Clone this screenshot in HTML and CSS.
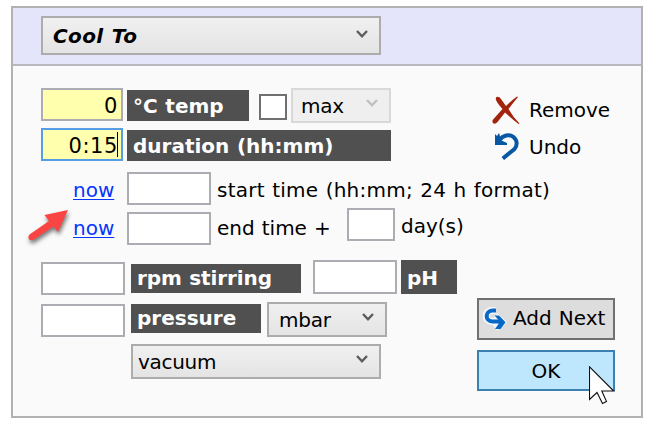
FILE: index.html
```html
<!DOCTYPE html>
<html lang="en">
<head>
<meta charset="utf-8">
<title>Cool To</title>
<link rel="stylesheet" href="styles.css">
</head>
<body>
<svg class="defs" width="0" height="0"><defs>
<symbol id="chevron" viewBox="0 0 12 9"><path d="M1 1L6 6.3L11 1" fill="none" stroke="currentColor" stroke-width="2.4"/></symbol>
</defs></svg>
<main class="panel">
  <header class="head">
    <div class="select operation"><span>Cool To</span><svg class="chev"><use href="#chevron"/></svg></div>
  </header>
  <div class="content">
    <section class="form">
      <div class="row temp">
        <div class="field required">0</div>
        <div class="tag temp-tag">°C temp</div>
        <div class="check"></div>
        <div class="select disabled"><span>max</span><svg class="chev"><use href="#chevron"/></svg></div>
      </div>
      <div class="row duration">
        <div class="field required focus">0:15<i class="caret"></i></div>
        <div class="tag duration-tag">duration (hh:mm)</div>
      </div>
      <div class="row start">
        <a class="now">now</a><div class="field"></div><span class="text start-text">start time (hh:mm; 24 h format)</span>
      </div>
      <div class="row end">
        <a class="now">now</a><div class="field lower"></div><span class="text end-text">end time +</span>
        <div class="field days"></div><span class="text">day(s)</span>
      </div>
      <div class="row stirring">
        <div class="field drop"></div><div class="tag rpm-tag">rpm stirring</div>
        <div class="field ph"></div><div class="tag ph-tag">pH</div>
      </div>
      <div class="row pressure">
        <div class="field drop"></div><div class="tag pressure-tag">pressure</div>
        <div class="select unit"><span>mbar</span><svg class="chev"><use href="#chevron"/></svg></div>
      </div>
      <div class="row vacuum">
        <div class="select mode"><span>vacuum</span><svg class="chev"><use href="#chevron"/></svg></div>
      </div>
    </section>
    <aside class="actions">
      <div class="action">
        <svg class="icon" viewBox="0 0 28 28"><path d="M4.500 1Q7 0 9 3L14 10Q20 4 25 .5L26 1Q21 7 16.500 13Q21 21 27.500 27.500L26.500 28Q19 22 13 16.500L5.500 26Q3 29 1 27Q-.5 25 1.500 23L10.500 13Q6 8 4.500 5Q3 2 4.500 1Z" fill="#a3240e"/></svg>
        <span>Remove</span>
      </div>
      <div class="action">
        <svg class="icon" viewBox="0 0 28 28"><path d="M7.500 8C11 3.500 17 1.500 21.500 5C25.500 8.500 25.500 13.500 22.500 17L10.800 26.500" fill="none" stroke="#0757a4" stroke-width="4"/><path d="M3 2V13H15V11L9.500 8.500L7 1L5 4Z" fill="#0757a4"/></svg>
        <span class="undo">Undo</span>
      </div>
      <div class="button add">
        <svg class="next" viewBox="0 0 24 24"><g stroke="#f2f6fa" stroke-width="7" fill="none"><path d="M13 3.500H9C1 4 1 14 9 14.500H18"/><path d="M12 9L19 15L12 21"/></g><path d="M13 3.500H9.500C2 4 1.500 14 9.500 14.500H17" fill="none" stroke="#0868c6" stroke-width="4"/><path d="M11.500 8.500H16L22.500 15.300L17.500 22H12L15.500 17V13Z" fill="#0868c6"/></svg>
        <span>Add Next</span>
      </div>
      <div class="button ok">OK
        <svg class="cursor" viewBox="0 0 27 39"><path d="M.5 .8V33.500L8 26.500L13.500 37.500L17.500 35.500L12.800 25H24.700Z" fill="#fff" stroke="#111" stroke-width="1.100"/></svg>
      </div>
    </aside>
  </div>
  <svg class="pointer" viewBox="0 0 48 44"><path d="M41 5L17.500 10L22 16L2.500 29.500C-.5 33 3 37 7 34.500L26.500 21.500L31 27Z" fill="#fa4545"/></svg>
</main>
</body>
</html>
```

FILE: styles.css
```css
* { box-sizing: border-box; }
body { margin: 0; padding: 6px 0 0 11px; background: #fff; color: #000; font: 20px/32px Verdana, "DejaVu Sans", sans-serif; word-spacing: .7px; }
.defs { position: absolute; }
.panel { position: relative; width: 632px; height: 412px; border: 2px solid #b2b2b2; background: #fafafa; }
.head { height: 58px; padding: 8px 0 0 28px; background: #e4e4fa; border-bottom: 2px solid #b9b9bd; }
.content { display: flex; padding-left: 28px; }
.form { width: 436px; padding-top: 22px; white-space: nowrap; }
.row { display: flex; align-items: flex-start; height: 35px; }
.select { display: flex; align-items: flex-start; justify-content: space-between; height: 35px; border: 2px solid #acacac; background: linear-gradient(#f0f0f0, #e4e4e4); padding: 0 11px 0 10px; }
.chev { width: 12px; height: 9px; margin-top: 9px; color: #5d5d5d; flex: none; }
.operation { width: 340px; height: 39px; font-weight: bold; font-style: italic; line-height: 36px; letter-spacing: .4px; }
.operation .chev { margin-top: 12px; }
.disabled { width: 100px; margin-left: 4px; padding-left: 8px; background: #efefef; border-color: #d9d9d9; letter-spacing: -.3px; }
.disabled .chev { color: #c0c0c0; }
.field { position: relative; flex: none; width: 84px; height: 33px; background: #fff; border: 2px solid #abadb3; }
.required { width: 82px; background: #ffffad; text-align: right; padding-right: 3px; font-size: 21px; letter-spacing: .6px; }
.focus { border-color: #569de5; }
.caret { position: absolute; right: 3px; top: 2px; width: 1px; height: 25px; background: #000; }
.tag { height: 31px; padding-left: 6px; margin: 2px 0 0 4px; background: #505050; color: #fff; font-weight: bold; }
.temp-tag { width: 122px; }
.check { width: 28px; height: 26px; margin: 6px 0 0 10px; background: #fff; border: 2px solid #707070; }
.duration { margin-top: 5px; height: 33px; }
.duration-tag { width: 264px; }
.start { margin-top: 11px; height: 33px; line-height: 36px; }
.now { flex: none; width: 86px; padding-left: 32px; color: #0536ff; text-decoration: underline; text-decoration-thickness: 1px; text-underline-offset: 2px; }
.text { margin-left: 6px; }
.start-text { letter-spacing: .25px; }
.end { margin-top: 3px; height: 37px; line-height: 36px; }
.end .now, .end-text { line-height: 40px; }
.end-text { width: 130px; }
.lower { margin-top: 4px; }
.days { width: 48px; }
.stirring { margin-top: 15px; }
.drop { margin-top: 2px; }
.rpm-tag { width: 170px; height: 29px; line-height: 28px; margin: 4px 0 0 6px; letter-spacing: -.1px; }
.ph { height: 34px; margin-left: 12px; }
.ph-tag { width: 56px; height: 34px; line-height: 36px; margin-top: 0; }
.pressure { margin-top: 7px; }
.pressure-tag { width: 130px; height: 29px; line-height: 28px; margin-left: 6px; }
.unit { width: 120px; margin-left: 6px; letter-spacing: -.2px; }
.vacuum { margin-top: 7px; padding-left: 90px; }
.mode { width: 250px; padding-left: 5px; letter-spacing: -.3px; }
.actions { width: 138px; padding-top: 29px; }
.action { display: flex; gap: 9px; height: 36px; margin-left: 15px; }
.icon { width: 28px; height: 28px; flex: none; margin-top: 1px; }
.action span { line-height: 30px; }
.action .undo { line-height: 32px; }
.button { position: relative; width: 138px; height: 42px; border: 2px solid #707070; background: #ddd; line-height: 36px; }
.add { display: flex; margin-top: 131px; white-space: nowrap; }
.next { width: 24px; height: 24px; margin: 7px 6px 0 4px; flex: none; }
.ok { height: 41px; margin-top: 10px; background: #bee6fd; border-color: #3c7fb1; line-height: 39px; text-align: center; }
.cursor { position: absolute; left: 110px; top: 14px; width: 27px; height: 39px; }
.pointer { position: absolute; left: 14px; top: 197px; width: 48px; height: 44px; filter: drop-shadow(1px 3px 2px #0008); }
```
